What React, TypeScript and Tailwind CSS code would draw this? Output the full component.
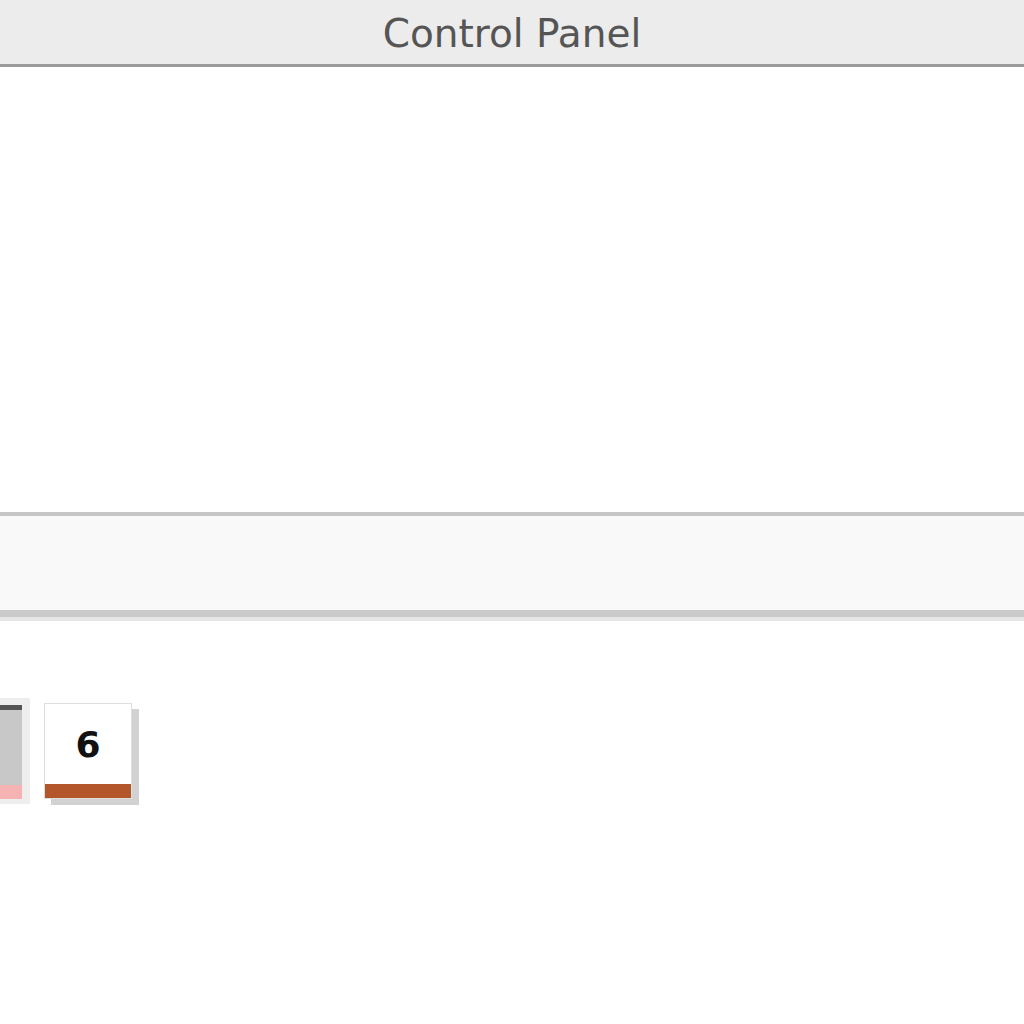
export default function App() {
  return (
    <div className="w-[1024px] h-[1024px] bg-white overflow-hidden flex flex-col">
      <header className="h-[67px] shrink-0 bg-[#ececec] border-b-[3px] border-[#9a9a9a] flex items-center justify-center">
        <h1 className="text-[39px] leading-none text-[#555] font-['DejaVu_Sans',sans-serif] pt-[2px]">
          Control Panel
        </h1>
      </header>

      <div className="h-[445px] shrink-0 bg-white" />

      <div className="shrink-0 border-t-[4px] border-[#c6c6c6] bg-[#f9f9f9]">
        <div className="h-[94px]" />
        <div className="h-[7px] bg-[#cacaca]" />
        <div className="h-[4px] bg-[#e6e6e6]" />
      </div>

      <div className="flex items-start pt-[77px] gap-[14px] ml-[-8px]">
        {/* partially visible tile */}
        <div className="w-[38px] h-[106px] bg-[#eeeeee] px-[8px] pt-[7px] pb-[5px]">
          <div className="h-full bg-[#c8c8c8] flex flex-col">
            <div className="h-[5px] bg-[#555]" />
            <div className="flex-1" />
            <div className="h-[14px] bg-[#f5b3b3]" />
          </div>
        </div>

        {/* tile 6 */}
        <div className="relative w-[88px] h-[96px] mt-[5px]">
          <div className="absolute left-[7px] top-[6px] w-[88px] h-[96px] bg-[#d2d2d2]" />
          <div className="relative w-[88px] h-[96px] bg-white border border-[#dedede] flex flex-col">
            <div className="flex-1 flex items-center justify-center pt-[2px]">
              <span className="text-[36px] font-bold leading-none text-[#111] font-['DejaVu_Sans',sans-serif]">6</span>
            </div>
            <div className="h-[14px] bg-[#b3562c]" />
          </div>
        </div>
      </div>
    </div>
  );
}
